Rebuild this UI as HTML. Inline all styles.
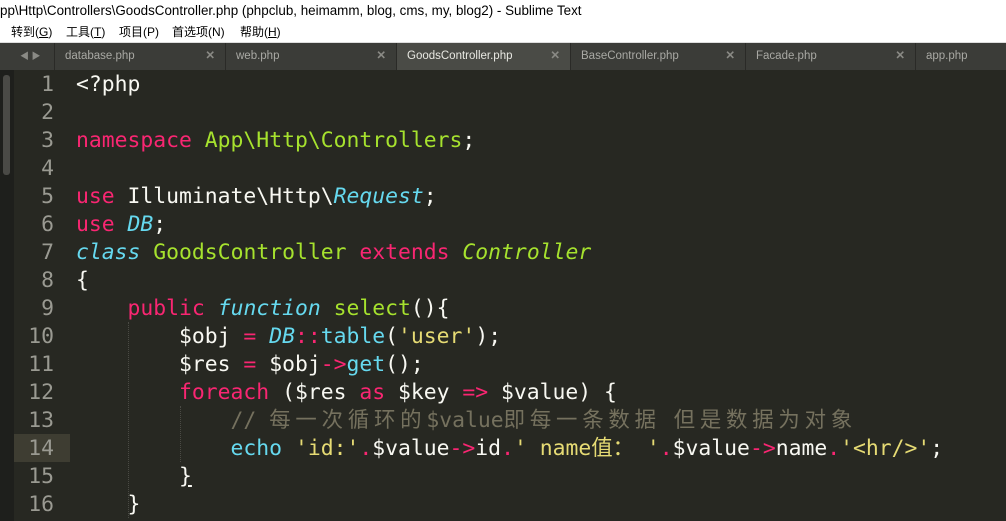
<!DOCTYPE html><html><head><meta charset="utf-8"><style>
body{margin:0;width:1006px;height:521px;overflow:hidden;background:#272822;font-family:"Liberation Sans","Noto Sans CJK SC",sans-serif;position:relative}
#title{position:absolute;top:0;left:0;width:1006px;height:22px;background:#fff;font-size:13.4px;line-height:22px;color:#000;white-space:nowrap}
#menu{position:absolute;top:22px;left:0;width:1006px;height:20px;background:#fff;font-size:12px;line-height:20px;color:#000}
#menu span{position:absolute;top:0}
#tabs{position:absolute;top:42px;left:0;width:1006px;height:27px;background:#3b3c38;border-top:1px solid #ddd}
.tab{position:absolute;top:0;height:27px;font-size:11.5px;line-height:26px;color:#a9a9a4;border-left:1px solid #2a2a27;box-sizing:border-box;padding-left:10px}
.tab b{position:absolute;right:10px;top:0;font-weight:bold;color:#8a8a85}
.act{background:#4a4b46;color:#e8e8e2}
#lstrip{position:absolute;top:42px;left:0;width:14px;height:479px;background:#1e1f1c}
#sb{position:absolute;top:33px;left:3px;width:7px;height:100px;background:#4a4a46;border-radius:3px}
.ln{position:absolute;left:14px;width:40px;text-align:right;color:#9a9a92;font-family:"DejaVu Sans Mono",monospace;font-size:21.4px;height:28px;line-height:28px}
.cd{position:absolute;left:76px;white-space:pre;color:#f8f8f2;font-family:"DejaVu Sans Mono","Noto Sans CJK SC",monospace;font-size:21.4px;height:28px;line-height:28px}
.k{color:#f92672}.g{color:#a6e22e}.c{color:#66d9ef;font-style:italic}.cn{color:#66d9ef}.s{color:#e6db74}.cm{color:#75715e}
.cj{letter-spacing:4.8px}
.guide{position:absolute;width:0;border-left:1px dotted #4a4a44}
</style></head><body>
<div id="title">pp\Http\Controllers\GoodsController.php (phpclub, heimamm, blog, cms, my, blog2) - Sublime Text</div>
<div id="menu"><span style="left:11px">转到(<u>G</u>)</span><span style="left:66px">工具(<u>T</u>)</span><span style="left:119px">项目(P)</span><span style="left:172px">首选项(N)</span><span style="left:240px">帮助(<u>H</u>)</span></div>
<div id="lstrip"><div id="sb"></div></div>
<div id="tabs">
<div style="position:absolute;left:20px;top:0;color:#8a8a85;font-size:9px;line-height:26px">◀ ▶</div>
<div class="tab" style="left:54px;width:171px">database.php<b>✕</b></div>
<div class="tab" style="left:225px;width:171px">web.php<b>✕</b></div>
<div class="tab act" style="left:396px;width:174px">GoodsController.php<b>✕</b></div>
<div class="tab" style="left:570px;width:175px">BaseController.php<b>✕</b></div>
<div class="tab" style="left:745px;width:170px">Facade.php<b>✕</b></div>
<div class="tab" style="left:915px;width:91px">app.php</div>
</div>
<div style="position:absolute;left:14px;top:434px;width:56px;height:28px;background:#3e3d32"></div>
<div class="guide" style="left:128px;top:322px;height:196px"></div>
<div class="guide" style="left:180px;top:406px;height:56px"></div>
<div class="ln" style="top:71px">1</div><div class="ln" style="top:99px">2</div><div class="ln" style="top:127px">3</div><div class="ln" style="top:155px">4</div><div class="ln" style="top:183px">5</div><div class="ln" style="top:211px">6</div><div class="ln" style="top:239px">7</div><div class="ln" style="top:267px">8</div><div class="ln" style="top:295px">9</div><div class="ln" style="top:323px">10</div><div class="ln" style="top:351px">11</div><div class="ln" style="top:379px">12</div><div class="ln" style="top:407px">13</div><div class="ln" style="top:435px">14</div><div class="ln" style="top:463px">15</div><div class="ln" style="top:491px">16</div>
<div class="cd" style="top:71px">&lt;?php</div>
<div class="cd" style="top:127px"><span class="k">namespace</span> <span class="g">App\Http\Controllers</span>;</div>
<div class="cd" style="top:183px"><span class="k">use</span> Illuminate\Http\<span class="c">Request</span>;</div>
<div class="cd" style="top:211px"><span class="k">use</span> <span class="c">DB</span>;</div>
<div class="cd" style="top:239px"><span class="c">class</span> <span class="g">GoodsController</span> <span class="k">extends</span> <span class="g" style="font-style:italic">Controller</span></div>
<div class="cd" style="top:267px">{</div>
<div class="cd" style="top:295px">    <span class="k">public</span> <span class="c">function</span> <span class="g">select</span>(){</div>
<div class="cd" style="top:323px">        $obj <span class="k">=</span> <span class="c">DB</span><span class="k">::</span><span class="cn">table</span>(<span class="s">'user'</span>);</div>
<div class="cd" style="top:351px">        $res <span class="k">=</span> $obj<span class="k">-&gt;</span><span class="cn">get</span>();</div>
<div class="cd" style="top:379px">        <span class="k">foreach</span> ($res <span class="k">as</span> $key <span class="k">=&gt;</span> $value) {</div>
<div class="cd cm" style="top:407px">            // <span class="cj">每一次循环的</span>$value<span class="cj">即每一条数据</span> <span class="cj">但是数据为对象</span></div>
<div class="cd" style="top:435px">            <span class="cn">echo</span> <span class="s">'id:'</span><span class="k">.</span>$value<span class="k">-&gt;</span>id<span class="k">.</span><span class="s">' name值： '</span><span class="k">.</span>$value<span class="k">-&gt;</span>name<span class="k">.</span><span class="s">'&lt;hr/&gt;'</span>;</div>
<div class="cd" style="top:463px">        <u>}</u></div>
<div class="cd" style="top:491px">    }</div>
</body></html>
